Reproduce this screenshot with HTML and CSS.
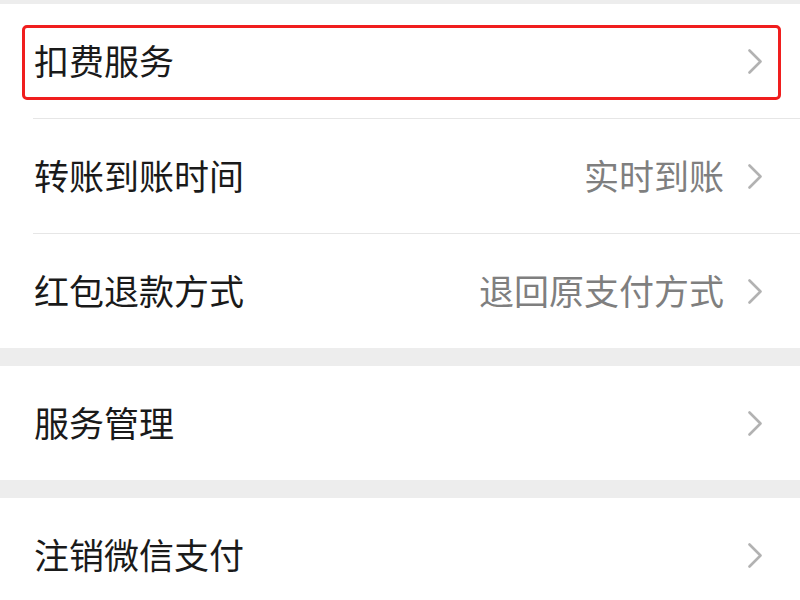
FILE: index.html
```html
<!DOCTYPE html>
<html lang="zh-CN">
<head>
<meta charset="utf-8">
<title>支付设置</title>
<link rel="stylesheet" href="styles.css">
</head>
<body>
<div class="page">
  <div class="group">
    <div class="row">
      <span class="label">扣费服务</span>
      <span class="right">
        <svg class="chev" viewBox="0 0 14 25" width="14" height="25"><polyline points="1.5,1.5 12.5,12.5 1.5,23.5"/></svg>
      </span>
      <div class="highlight"></div>
    </div>
    <div class="row sep">
      <span class="label">转账到账时间</span>
      <span class="right">
        <span class="value">实时到账</span>
        <svg class="chev" viewBox="0 0 14 25" width="14" height="25"><polyline points="1.5,1.5 12.5,12.5 1.5,23.5"/></svg>
      </span>
    </div>
    <div class="row sep">
      <span class="label">红包退款方式</span>
      <span class="right">
        <span class="value">退回原支付方式</span>
        <svg class="chev" viewBox="0 0 14 25" width="14" height="25"><polyline points="1.5,1.5 12.5,12.5 1.5,23.5"/></svg>
      </span>
    </div>
  </div>
  <div class="group">
    <div class="row">
      <span class="label">服务管理</span>
      <span class="right">
        <svg class="chev" viewBox="0 0 14 25" width="14" height="25"><polyline points="1.5,1.5 12.5,12.5 1.5,23.5"/></svg>
      </span>
    </div>
  </div>
  <div class="group">
    <div class="row">
      <span class="label">注销微信支付</span>
      <span class="right">
        <svg class="chev" viewBox="0 0 14 25" width="14" height="25"><polyline points="1.5,1.5 12.5,12.5 1.5,23.5"/></svg>
      </span>
    </div>
  </div>
</div>
</body>
</html>
```
FILE: styles.css
```css
html, body {
  margin: 0;
  padding: 0;
  background: #ededed;
}
body {
  font-family: "Noto Sans CJK SC", "Noto Sans", sans-serif;
  overflow: hidden;
}
.page {
  padding-top: 4px;
  display: flex;
  flex-direction: column;
  gap: 18px;
}
.group {
  background: #ffffff;
  display: flex;
  flex-direction: column;
}
.row {
  position: relative;
  height: 114px;
  display: flex;
  align-items: center;
  justify-content: space-between;
  padding: 0 38px 0 33px;
  box-sizing: content-box;
}
.row.sep::before {
  content: "";
  position: absolute;
  top: -1px;
  left: 33px;
  right: 0;
  height: 1px;
  background: #e6e6e6;
}
.row.sep {
  margin-top: 1px;
}
.label {
  font-size: 35px;
  color: #1a1a1a;
  line-height: 1;
  padding-left: 1px;
  padding-bottom: 4px;
}
.right {
  display: flex;
  align-items: center;
  gap: 24px;
}
.value {
  font-size: 35px;
  color: #7f7f7f;
  line-height: 1;
  padding-bottom: 4px;
}
.chev {
  display: block;
  fill: none;
  stroke: #b2b2b2;
  stroke-width: 2.6;
  stroke-linecap: round;
  stroke-linejoin: round;
}
.highlight {
  position: absolute;
  top: 21px;
  left: 22px;
  right: 19px;
  bottom: 18px;
  border: 3px solid #f01e1e;
  border-radius: 5px;
  pointer-events: none;
}
```
